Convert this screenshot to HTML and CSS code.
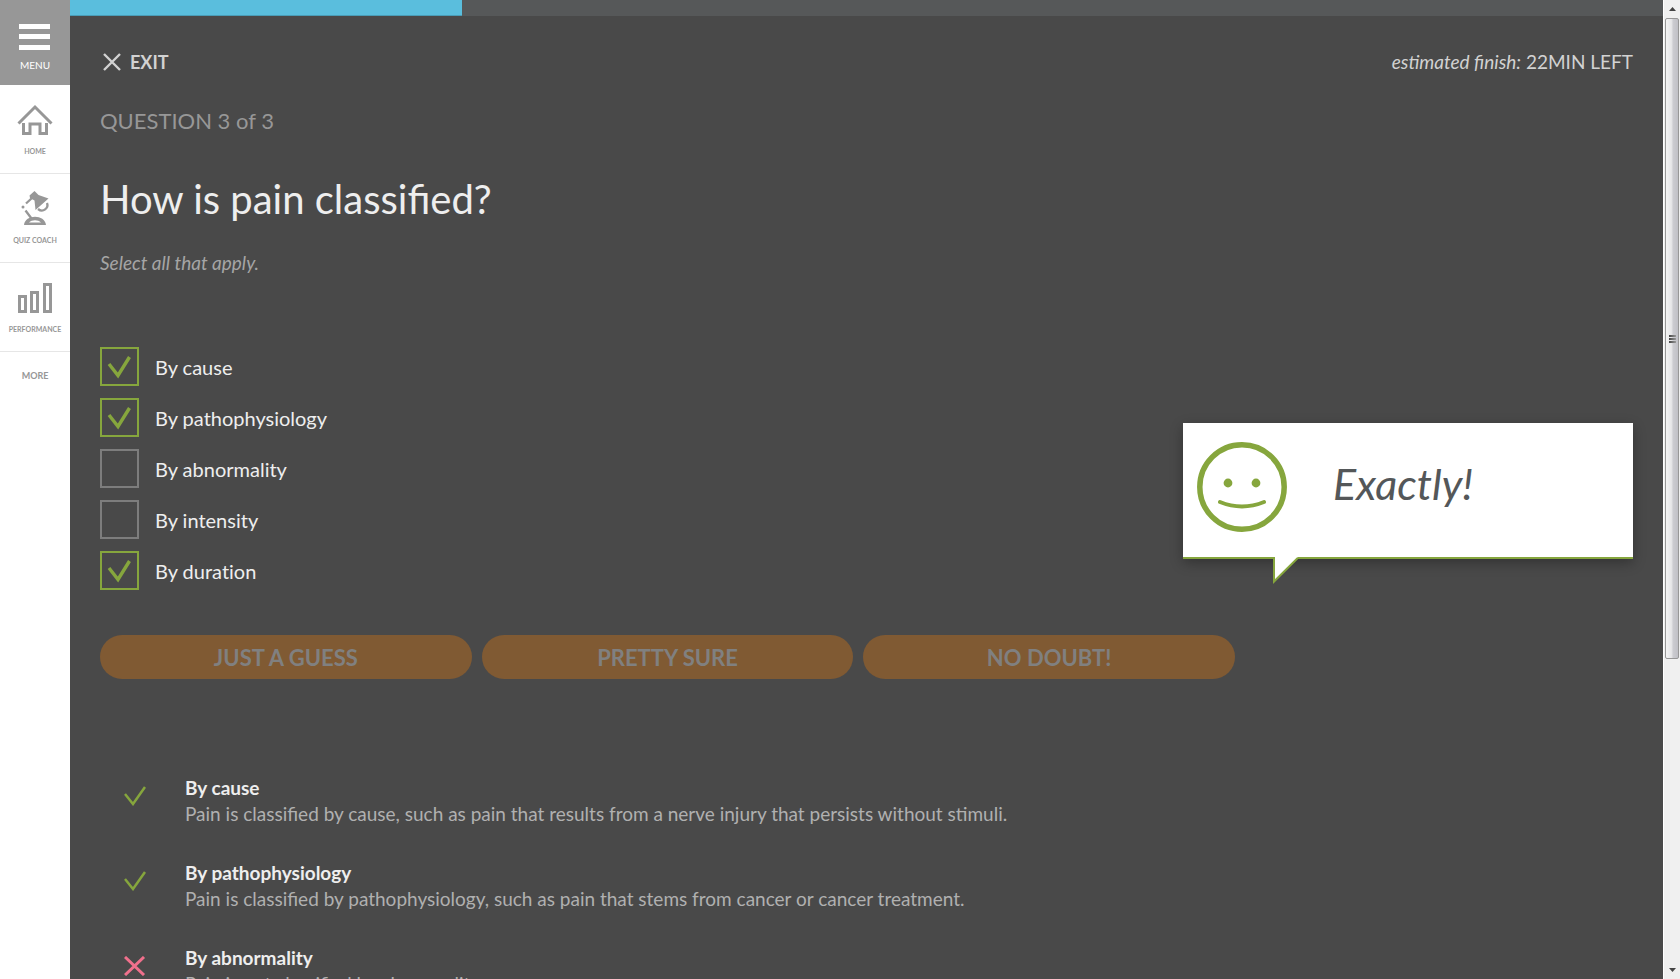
FILE: index.html
```html
<!DOCTYPE html>
<html lang="en">
<head>
<meta charset="utf-8">
<title>Quiz Coach</title>
<link rel="stylesheet" href="styles.css">
</head>
<body>
<div class="app">
  <nav class="sidebar" aria-label="Main">
    <button class="menu" type="button">
      <svg width="32" height="26" viewBox="0 0 32 26" fill="currentColor" aria-hidden="true"><path d="M0 0h31v5H0zM0 10h31v5H0zM0 21h31v5H0z"/></svg>
      <span>MENU</span>
    </button>
    <a class="nav-item" href="#home">
      <svg width="36" height="34" viewBox="0 0 36 34" fill="none" stroke="currentColor" stroke-width="3" aria-hidden="true"><path d="M1.500 21.500 18 5l16.500 16.500"/><path d="M6.500 21v10.500h6.500V22h10v9.500h6.500V21"/></svg>
      <span>HOME</span>
    </a>
    <a class="nav-item" href="#coach">
      <svg width="36" height="34" viewBox="0 0 36 34" fill="currentColor" aria-hidden="true"><path d="M12.500 4.500 17.500 0 21.500 4l10 3.500L18.500 19 17.500 9.500 13 7z"/><circle cx="6" cy="16" r="1.500"/><path d="m9 12.500 6-5.500M8.500 19.500l6 8" fill="none" stroke="currentColor" stroke-width="2.300"/><path d="M30 12c2 5-4 10-9 6" fill="none" stroke="currentColor" stroke-width="2.300"/><path fill-rule="evenodd" d="M7 34c1-11 21-11 22 0zm5-2.500h12c-3-3-9-3-12 0z"/></svg>
      <span>QUIZ COACH</span>
    </a>
    <a class="nav-item" href="#performance">
      <svg width="36" height="34" viewBox="0 0 36 34" fill="none" stroke="currentColor" stroke-width="3" aria-hidden="true"><path d="M2.500 16.500h6v15h-6zM14.500 12.500h6v19h-6zM27.500 4.500h6v27h-6z"/></svg>
      <span>PERFORMANCE</span>
    </a>
    <a class="more" href="#more">MORE</a>
  </nav>

  <main class="quiz">
    <div class="progress"><div class="progress-fill"></div></div>
    <div class="content">
      <header class="topbar">
        <button class="exit" type="button">
          <svg width="18" height="18" viewBox="0 0 18 18" fill="none" stroke="currentColor" stroke-width="2.400" aria-hidden="true"><path d="m1 1 16 16M17 1 1 17"/></svg>
          <span>EXIT</span>
        </button>
        <p class="finish"><em>estimated finish:</em> 22MIN LEFT</p>
      </header>
      <p class="counter">QUESTION 3 of 3</p>
      <h1 class="question">How is pain classified?</h1>
      <p class="hint">Select all that apply.</p>

      <div class="answer-area">
        <div class="options">
          <label class="option"><span class="box"><input type="checkbox" checked><svg class="tick" viewBox="0 0 39 39" aria-hidden="true"><path d="m9 17 9 11.500L29.500 10"/></svg></span>By cause</label>
          <label class="option"><span class="box"><input type="checkbox" checked><svg class="tick" viewBox="0 0 39 39" aria-hidden="true"><path d="m9 17 9 11.500L29.500 10"/></svg></span>By pathophysiology</label>
          <label class="option"><span class="box"><input type="checkbox"></span>By abnormality</label>
          <label class="option"><span class="box"><input type="checkbox"></span>By intensity</label>
          <label class="option"><span class="box"><input type="checkbox" checked><svg class="tick" viewBox="0 0 39 39" aria-hidden="true"><path d="m9 17 9 11.500L29.500 10"/></svg></span>By duration</label>
        </div>
        <aside class="bubble">
          <svg class="face" width="90" height="90" viewBox="0 0 90 90" aria-hidden="true"><circle cx="45" cy="45" r="42.200"/><path d="M23 60q22 9 44 0"/><circle class="eye" cx="31" cy="41" r="4.400"/><circle class="eye" cx="59" cy="41" r="4.400"/></svg>
          <p class="verdict">Exactly!</p>
          <svg class="tail" width="26" height="27" viewBox="0 0 26 27" aria-hidden="true"><path class="tail-fill" d="M1 0v25L25 1V0z"/><path class="tail-line" d="M1 0v24.500L25 .8"/></svg>
        </aside>
      </div>

      <div class="confidence">
        <button type="button" disabled>JUST A GUESS</button>
        <button type="button" disabled>PRETTY SURE</button>
        <button type="button" disabled>NO DOUBT!</button>
      </div>

      <dl class="rationales">
        <div class="rationale">
          <svg class="right" width="22" height="20" viewBox="0 0 22 20" aria-hidden="true"><path d="m1 8 8 10L21 1"/></svg>
          <dt>By cause</dt>
          <dd>Pain is classified by cause, such as pain that results from a nerve injury that persists without stimuli.</dd>
        </div>
        <div class="rationale">
          <svg class="right" width="22" height="20" viewBox="0 0 22 20" aria-hidden="true"><path d="m1 8 8 10L21 1"/></svg>
          <dt>By pathophysiology</dt>
          <dd>Pain is classified by pathophysiology, such as pain that stems from cancer or cancer treatment.</dd>
        </div>
        <div class="rationale">
          <svg class="wrong" width="22" height="20" viewBox="0 0 22 20" aria-hidden="true"><path d="m1 1 19 18M20 1 1 19"/></svg>
          <dt>By abnormality</dt>
          <dd>Pain is not classified by abnormality.</dd>
        </div>
      </dl>
    </div>
  </main>

  <div class="scrollbar" aria-hidden="true">
    <svg class="arrow" width="7" height="4" viewBox="0 0 7 4"><path d="M0 4 3.500 0 7 4z"/></svg>
    <div class="track"><div class="thumb"><i></i><i></i><i></i></div></div>
    <svg class="arrow" width="7" height="4" viewBox="0 0 7 4"><path d="M0 0h7L3.500 4z"/></svg>
  </div>
</div>
</body>
</html>
```
FILE: styles.css
```css
* { box-sizing: border-box; }
body {
  margin: 0;
  background: #494949;
  color: #eee;
  font-family: Lato, "Open Sans", sans-serif;
}
p, h1, dl, dd { margin: 0; }
button { border: 0; padding: 0; background: none; font: inherit; color: inherit; }
a { color: inherit; text-decoration: none; }
svg { display: block; flex: none; }

.app { display: flex; height: 100vh; overflow: hidden; }

/* Sidebar */
.sidebar {
  flex: none;
  width: 70px;
  display: flex;
  flex-direction: column;
  background: #fff;
  color: #979797;
}
.menu {
  height: 85px;
  padding-top: 24px;
  display: flex;
  flex-direction: column;
  align-items: center;
  gap: 9px;
  background: #979797;
  color: #fff;
  font-size: 10px;
  line-height: 12px;
}
.nav-item {
  height: 89px;
  padding-top: 17px;
  display: flex;
  flex-direction: column;
  align-items: center;
  gap: 10px;
  border-bottom: 1px solid #e6e6e6;
  font-size: 7px;
  font-weight: 700;
  line-height: 10px;
}
.more {
  padding-top: 17px;
  font-size: 9px;
  font-weight: 700;
  line-height: 14px;
  text-align: center;
}

/* Quiz */
.quiz { flex: 1; min-width: 0; overflow: hidden; }
.progress { height: 16px; background: #565859; }
.progress-fill {
  width: 392px;
  height: 100%;
  background: #5abedd;
  border-bottom: 1px solid #4a9db7;
}
.content { padding: 32px 30px 0; }
.topbar {
  display: flex;
  justify-content: space-between;
  align-items: center;
  line-height: 28px;
}
.exit {
  display: flex;
  align-items: center;
  gap: 9px;
  padding-left: 3px;
  color: #d2d2d2;
  font-size: 18px;
  font-weight: 700;
}
.finish { color: #d2d2d2; font-size: 19px; line-height: 26px; }
.counter { margin-top: 30px; color: #979797; font-size: 22px; line-height: 30px; }
.question { margin-top: 38px; font-size: 40px; font-weight: 400; line-height: 50px; }
.hint { margin-top: 26px; color: #a5a5a5; font-size: 19px; font-style: italic; line-height: 26px; }

.answer-area {
  margin-top: 71px;
  display: flex;
  justify-content: space-between;
  align-items: flex-start;
}
.options { display: flex; flex-direction: column; gap: 12px; }
.option {
  display: flex;
  align-items: center;
  gap: 16px;
  font-size: 20px;
  font-variant-ligatures: none;
}
.box { display: grid; width: 39px; height: 39px; }
.box > * { grid-area: 1 / 1; }
.box input {
  appearance: none;
  width: 39px;
  height: 39px;
  margin: 0;
  border: 2px solid #7d7d7d;
}
.box input:checked { border-color: #86a63d; }
.tick { fill: none; stroke: #86a63d; stroke-width: 3.400; pointer-events: none; }

.bubble {
  position: relative;
  width: 450px;
  height: 136px;
  margin-top: 76px;
  padding: 19px 14px;
  display: flex;
  align-items: flex-start;
  gap: 46px;
  background: #fff;
  border-bottom: 2px solid #86a63d;
  box-shadow: 0 4px 12px rgba(0, 0, 0, .3);
}
.face { fill: none; stroke: #86a63d; stroke-width: 5.500; }
.face path { stroke-width: 4; stroke-linecap: round; }
.face .eye { fill: #86a63d; stroke: none; }
.verdict { margin-top: 16px; color: #545759; font-size: 43px; font-style: italic; line-height: 52px; }
.tail { position: absolute; left: 90px; top: 134px; }
.tail-fill { fill: #fff; }
.tail-line { fill: none; stroke: #86a63d; stroke-width: 2; }

.confidence {
  max-width: 1135px;
  margin-top: 45px;
  display: grid;
  grid-template-columns: repeat(3, 1fr);
  gap: 10px;
}
.confidence button {
  height: 44px;
  border-radius: 22px;
  background: #805a33;
  color: #808080;
  font-size: 22px;
  font-weight: 700;
}

.rationales { margin-top: 96px; display: grid; gap: 33px; }
.rationale {
  display: grid;
  grid-template-columns: 61px 1fr;
  padding-left: 24px;
  font-size: 19px;
  line-height: 26px;
}
.rationale svg { grid-row: 1 / 3; margin-top: 11px; fill: none; }
.rationale dt, .rationale dd { grid-column: 2; }
.rationale dt { font-weight: 700; }
.rationale dd { color: #b0b0b0; }
.right { stroke: #86a63d; stroke-width: 2.500; }
.wrong { stroke: #f0708c; stroke-width: 3; }

/* Scrollbar */
.scrollbar {
  flex: none;
  width: 17px;
  padding: 7px 1px;
  display: flex;
  flex-direction: column;
  align-items: center;
  gap: 7px;
  background: #f0f0f0;
  border-left: 1px solid #fff;
}
.arrow { fill: #444; }
.track { flex: 1; align-self: stretch; }
.thumb {
  height: 68%;
  display: flex;
  flex-direction: column;
  align-items: center;
  justify-content: center;
  gap: 1px;
  border: 1px solid #979797;
  border-radius: 2px;
  background: linear-gradient(90deg, #f5f5f5, #e6e6e8 45%, #cbcbd0 60%, #c0c0c6);
}
.thumb i { width: 7px; height: 2px; background: linear-gradient(90deg, #444, #999); }
```
